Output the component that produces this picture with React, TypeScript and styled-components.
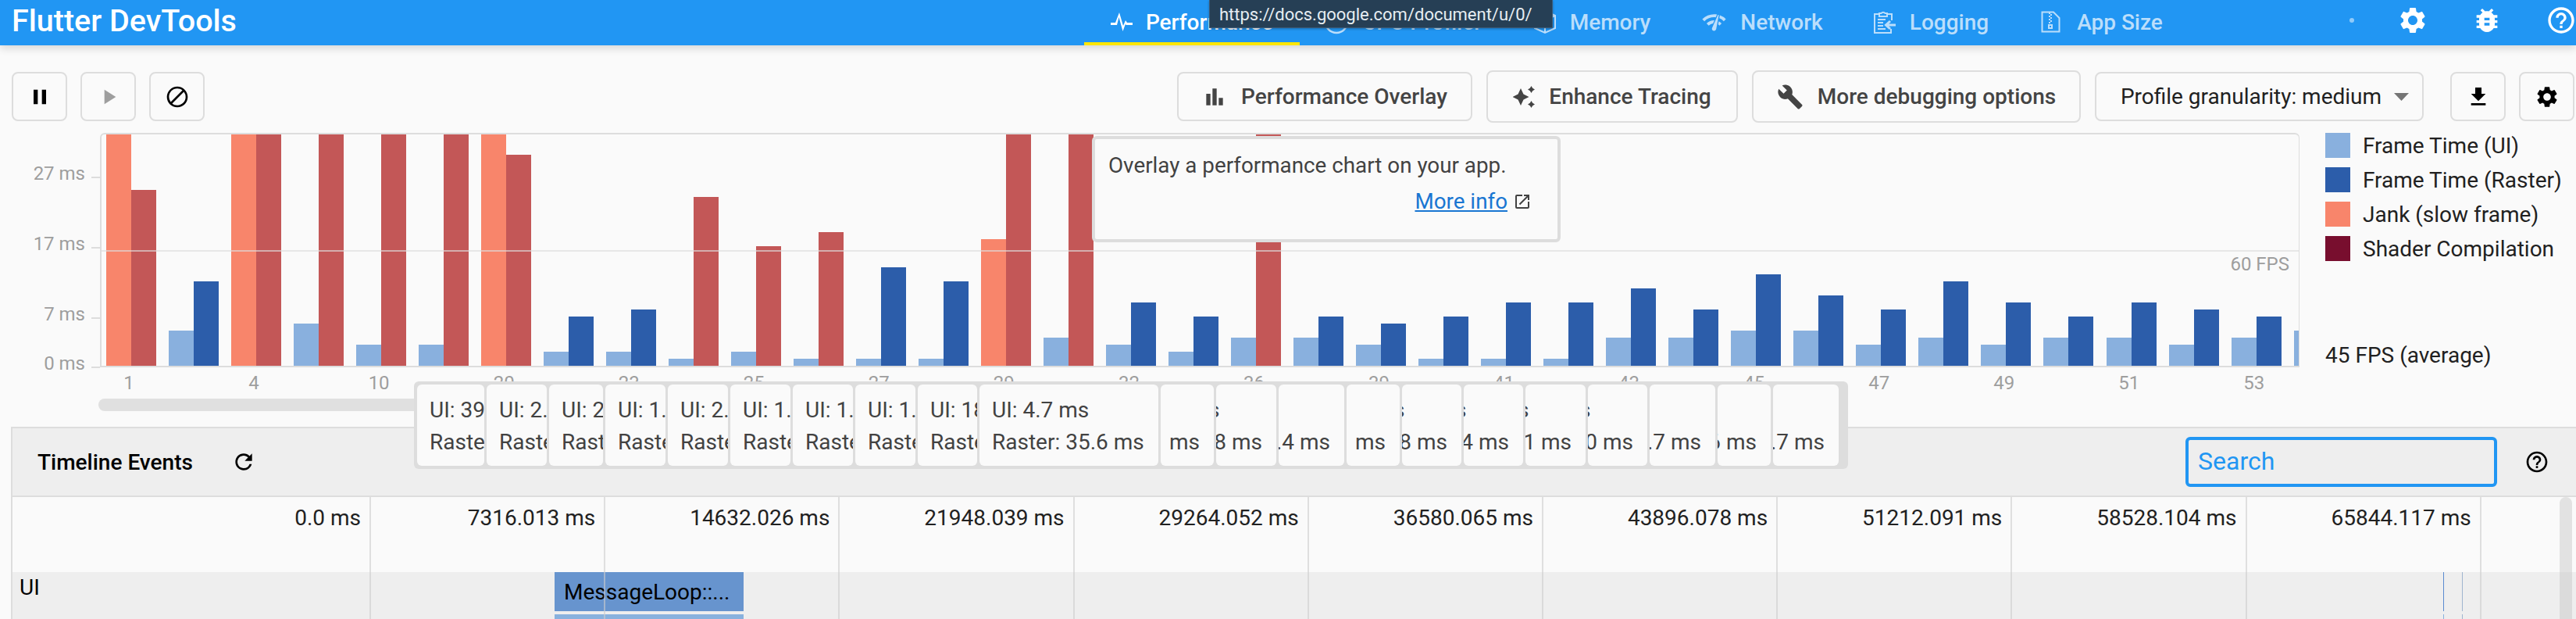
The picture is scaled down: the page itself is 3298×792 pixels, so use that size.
import React from 'react';
import styled, { createGlobalStyle } from 'styled-components';
import {
  MdPause, MdPlayArrow, MdBlock, MdFileDownload, MdSettings, MdBugReport, MdHelpOutline,
  MdBarChart, MdBuild, MdRefresh, MdOpenInNew, MdNetworkCheck,
} from 'react-icons/md';

const GlobalStyle = createGlobalStyle`
  html, body { margin: 0; padding: 0; background: #fafafa; overflow: hidden; }
  body { font-family: Roboto, "Liberation Sans", sans-serif; }
`;

const Page = styled.div`
  position: relative;
  width: 3298px;
  height: 792px;
  overflow: hidden;
  background: #fafafa;
  display: flex;
  flex-direction: column;
`;

/* ---------- App bar ---------- */
const AppBar = styled.header`
  position: relative;
  z-index: 3;
  flex: none;
  height: 58px;
  background: #2196f3;
  box-shadow: 0 4px 10px rgba(0, 0, 0, 0.14);
  display: flex;
  align-items: stretch;
`;
const Title = styled.h1`
  flex: none;
  width: 1373px;
  margin: 0;
  padding-left: 15px;
  color: #fff;
  font-size: 39.5px;
  font-weight: 500;
  line-height: 54px;
`;
const Tabs = styled.nav`
  display: flex;
  flex: none;
`;
const Tab = styled.div<{ $w: number; $active?: boolean }>`
  width: ${p => p.$w}px;
  display: flex;
  align-items: center;
  justify-content: center;
  gap: 17px;
  box-sizing: border-box;
  padding-top: 2px;
  color: ${p => (p.$active ? '#ffffff' : '#bbdefb')};
  font-size: 28px;
  font-weight: 500;
  white-space: nowrap;
  border-bottom: 4px solid ${p => (p.$active ? '#ffe600' : 'transparent')};
`;
const ActionGroup = styled.div`
  flex: 1;
  display: flex;
  align-items: center;
  justify-content: flex-end;
  gap: 55px;
  margin-right: -1px;
  color: #fff;
  padding-bottom: 6px;
`;
const StatusDot = styled.span`
  width: 6px;
  height: 6px;
  border-radius: 50%;
  background: #90caf9;
`;
const UrlTip = styled.div`
  position: absolute;
  z-index: 5;
  left: 1548px;
  top: 0;
  width: 440px;
  height: 36px;
  box-sizing: border-box;
  background: #263f55;
  border: 1px solid #3a5a78;
  border-top: 0;
  box-shadow: 0 1px 3px rgba(0, 0, 0, 0.3);
  color: #e6edf2;
  font-size: 22px;
  line-height: 38px;
  padding-left: 12px;
  white-space: nowrap;
`;

/* ---------- Toolbar ---------- */
const Toolbar = styled.div`
  flex: none;
  margin-top: 32px;
  height: 67px;
  padding: 0 2px 0 15px;
  display: flex;
  align-items: center;
`;
const IconGroup = styled.div`
  display: flex;
  gap: 17px;
`;
const Spacer = styled.div`
  flex: 1;
`;
const IconButton = styled.button<{ $muted?: boolean }>`
  width: 71px;
  height: 63px;
  padding: 0;
  background: #fafafa;
  border: 2px solid #dddddd;
  border-radius: 8px;
  display: flex;
  align-items: center;
  justify-content: center;
  color: ${p => (p.$muted ? '#9e9e9e' : '#000')};
`;
const TextButton = styled.button<{ $w: number; $tall?: boolean }>`
  width: ${p => p.$w}px;
  height: ${p => (p.$tall ? 67 : 63)}px;
  margin-left: 18px;
  padding: 0;
  background: #fafafa;
  border: 2px solid #dddddd;
  border-radius: 8px;
  display: flex;
  align-items: center;
  justify-content: center;
  gap: 18px;
  color: #444;
  font-family: inherit;
  font-size: 28px;
  font-weight: 500;
  white-space: nowrap;
`;
const Dropdown = styled(TextButton)`
  margin-right: 34px;
  padding-left: 14px;
  gap: 16px;
  color: #212121;
  font-weight: 400;
`;

/* ---------- Frames chart ---------- */
const ChartRow = styled.section`
  flex: none;
  margin-top: 13px;
  height: 300px;
  display: flex;
`;
const YAxis = styled.div`
  flex: none;
  width: 128px;
  padding-top: 56px;
  box-sizing: border-box;
`;
const YTick = styled.div<{ $h: number }>`
  height: ${p => p.$h}px;
  display: flex;
  justify-content: flex-end;
  align-items: flex-start;
  gap: 8px;
  color: #9e9e9e;
  font-size: 24px;
  line-height: 26px;
  &::after {
    content: '';
    width: 11px;
    height: 2px;
    background: #dddddd;
  }
`;
const YLabel = styled.span`
  margin-top: -17px;
`;
const Plot = styled.div`
  position: relative;
  flex: none;
  width: 2816px;
  box-sizing: border-box;
  border: 2px solid #dddddd;
  border-right-width: 1px;
  border-radius: 6px 6px 0 0;
  overflow: hidden;
`;
const Bars = styled.div`
  height: 100%;
  padding-left: 6px;
  display: flex;
  align-items: flex-end;
  gap: 16.03px;
`;
const BarGroup = styled.div`
  flex: none;
  width: 64px;
  height: 100%;
  display: flex;
  align-items: flex-end;
`;
const toneColor = { ui: '#89b0de', raster: '#2c5daa', jank: '#f8856b', jankRaster: '#c35757' };
type Tone = keyof typeof toneColor;
const Bar = styled.div<{ $h: number; $tone: Tone }>`
  flex: none;
  width: 32px;
  height: ${p => p.$h}px;
  background: ${p => toneColor[p.$tone]};
`;
const TargetLine = styled.div`
  position: absolute;
  left: 0;
  right: 0;
  top: 148px;
  height: 2px;
  background: rgba(221, 221, 221, 0.65);
`;
const FpsMark = styled.span`
  position: absolute;
  right: 12px;
  top: 153px;
  color: #9e9e9e;
  font-size: 24px;
  line-height: 26px;
`;
const Popup = styled.div`
  position: absolute;
  left: 1268px;
  top: 2px;
  z-index: 2;
  width: 600px;
  height: 136px;
  box-sizing: border-box;
  background: #fafafa;
  border: 4px solid #dddddd;
  border-radius: 6px;
  padding: 18px 16px 0 17px;
  color: #424242;
  font-size: 27.8px;
  line-height: 32px;
  white-space: nowrap;
`;
const PopupLink = styled.div`
  margin-top: 14px;
  display: flex;
  justify-content: flex-end;
  align-items: center;
  gap: 7px;
  padding-right: 17px;
`;
const MoreInfo = styled.a`
  color: #1976d2;
  text-decoration: underline;
`;
const Legend = styled.aside`
  flex: 1;
  margin-left: 33px;
  display: flex;
  flex-direction: column;
  gap: 12px;
  color: #212121;
  font-size: 28px;
`;
const LegendItem = styled.div`
  height: 32px;
  display: flex;
  align-items: center;
  gap: 16px;
  white-space: nowrap;
`;
const Swatch = styled.span<{ $c: string }>`
  flex: none;
  width: 32px;
  height: 32px;
  background: ${p => p.$c};
`;
const FpsAverage = styled.div`
  margin-top: auto;
  line-height: 30px;
`;
const XLabels = styled.div`
  flex: none;
  height: 40px;
  padding-left: 85px;
  display: flex;
  color: #9e9e9e;
  font-size: 24px;
  line-height: 40px;
`;
const XLabel = styled.span`
  flex: none;
  width: 160.06px;
  text-align: center;
`;
const ScrollThumb = styled.div`
  flex: none;
  margin-left: 126px;
  width: 600px;
  height: 16px;
  border-radius: 8px;
  background: #e0e0e0;
`;

/* ---------- Stacked hover cards ---------- */
const CardStrip = styled.div`
  position: absolute;
  z-index: 2;
  left: 530px;
  top: 488px;
  box-sizing: border-box;
  width: 1836px;
  height: 112px;
  padding: 4px;
  background: #dddddd;
  border-radius: 6px;
  display: flex;
  gap: 3px;
`;
const FrameCard = styled.div<{ $w: number; $end?: boolean }>`
  flex: none;
  width: ${p => p.$w}px;
  box-sizing: border-box;
  padding: 12px ${p => (p.$end ? 18 : 0)}px 0 ${p => (p.$end ? 0 : 16)}px;
  background: #fafafa;
  border-radius: 6px;
  overflow: hidden;
  display: flex;
  justify-content: ${p => (p.$end ? 'flex-end' : 'flex-start')};
  color: #424242;
  font-size: 28px;
  line-height: 41px;
  white-space: nowrap;
`;
const CardText = styled.div`
  flex: none;
`;

/* ---------- Timeline ---------- */
const Timeline = styled.section`
  flex: 1;
  margin: 20px 0 0 14px;
  border-left: 2px solid #dddddd;
  border-top: 2px solid #dddddd;
  display: flex;
  flex-direction: column;
  min-height: 0;
`;
const TimelineHeader = styled.div`
  flex: none;
  height: 88px;
  box-sizing: border-box;
  background: #eeeeee;
  border-bottom: 2px solid #dddddd;
  padding: 0 34px 0 32px;
  display: flex;
  align-items: center;
  color: #000;
`;
const TimelineTitle = styled.span`
  font-size: 28px;
  font-weight: 500;
  margin-right: 49px;
`;
const SearchBox = styled.div`
  width: 399px;
  height: 64px;
  box-sizing: border-box;
  border: 4px solid #2196f3;
  border-radius: 6px;
  padding-left: 12px;
  margin-right: 35px;
  color: #2196f3;
  font-size: 32px;
  line-height: 54px;
`;
const Tracks = styled.div`
  position: relative;
  flex: 1;
  overflow: hidden;
`;
const AxisSpace = styled.div`
  height: 96px;
`;
const UiTrack = styled.div`
  position: relative;
  height: 60px;
  background: #eeeeee;
  padding-left: 9px;
  color: #000;
  font-size: 28px;
  line-height: 40px;
`;
const EventBlock = styled.div<{ $l: number; $t: number; $w: number; $h: number; $c: string }>`
  position: absolute;
  left: ${p => p.$l}px;
  top: ${p => p.$t}px;
  width: ${p => p.$w}px;
  height: ${p => p.$h}px;
  background: ${p => p.$c};
`;
const EventLabel = styled.span`
  display: block;
  padding-left: 12px;
  color: #000;
  font-size: 28px;
  line-height: 52px;
  white-space: nowrap;
`;
const TimeGrid = styled.div`
  position: absolute;
  inset: 0;
  display: flex;
`;
const TimeCell = styled.div<{ $w: number }>`
  flex: none;
  width: ${p => p.$w}px;
  box-sizing: border-box;
  border-right: 2px solid rgba(205, 205, 205, 0.6);
  padding: 7px 11px 0 0;
  text-align: right;
  color: #212121;
  font-size: 28px;
  line-height: 40px;
  white-space: nowrap;
`;
const VScroll = styled.div`
  position: absolute;
  right: 5px;
  top: 0;
  bottom: -10px;
  width: 16px;
  border-radius: 8px;
  background: rgba(190, 190, 190, 0.4);
`;

/* ---------- Drawn icons ---------- */
const PulseIcon = () => (
  <svg width="28" height="24" viewBox="0 0 28 24" fill="currentColor">
    <path d="M0 13H6L11 0L16 17L19 10L21 13H28V16H19.5L19 14.5L15.5 24L10.5 6L8 16H0Z" />
  </svg>
);
const TimerIcon = () => (
  <svg width="32" height="32" viewBox="0 0 32 32" fill="none" stroke="currentColor" strokeWidth="2.5">
    <circle cx="16" cy="16" r="14" />
  </svg>
);
const MemoryIcon = () => (
  <svg width="30" height="32" viewBox="0 0 30 32" fill="none" stroke="currentColor" strokeWidth="2">
    <path d="M15 2L28 8V24L15 30L2 24V8Z" />
    <path d="M2 8L15 14L28 8M15 14V30" />
  </svg>
);
const LoggingIcon = () => (
  <svg width="30" height="30" viewBox="0 0 30 30" fill="none" stroke="currentColor" strokeWidth="2">
    <path d="M8 5H2V29H23V24" />
    <path d="M18 5H24V13" />
    <path d="M8 8V4H10.5A3 3 0 0 1 15.5 4H18V8Z" />
    <path d="M6 12H16M6 16H13M6 20H13M6 24H16" />
    <path d="M29 19H17M22 14L16.5 19L22 24" strokeWidth="3" />
  </svg>
);
const ZipIcon = () => (
  <svg width="29" height="28" viewBox="0 0 29 28" fill="none" stroke="currentColor" strokeWidth="2">
    <path d="M1.5 1.5H16L23.5 9V26.5H1.5Z" />
    <path d="M10 3H12M12 5H14M10 7H12M12 9H14M10 11H12M12 13H14M10 15H12" />
    <path d="M10 18H14V22H10Z" />
  </svg>
);
const SparkleIcon = () => (
  <svg width="28" height="28" viewBox="0 0 28 28" fill="currentColor">
    <path d="M10 3L13.5 10.5L20.5 14L13.5 17.5L10 25L6.5 17.5L-0.5 14L6.5 10.5Z" />
    <path d="M23.5 0L25.2 2.8L28 4.5L25.2 6.2L23.5 9L21.8 6.2L19 4.5L21.8 2.8Z" />
    <path d="M23.5 19L25.2 21.8L28 23.5L25.2 25.2L23.5 28L21.8 25.2L19 23.5L21.8 21.8Z" />
  </svg>
);
const CaretIcon = () => (
  <svg width="19" height="10" viewBox="0 0 19 10" fill="#757575">
    <path d="M0 0H19L9.5 10Z" />
  </svg>
);

/* ---------- Data ---------- */
const F = 400;
type Frame = [number, number, '' | 'r' | 'ur'];
const frames: Frame[] = [
  [F, 225, 'ur'], [45, 108, ''], [F, F, 'ur'], [54, F, 'r'], [27, F, 'r'], [27, F, 'r'],
  [F, 270, 'ur'], [18, 63, ''], [18, 72, ''], [9, 216, 'r'], [18, 153, 'r'], [9, 171, 'r'],
  [9, 126, ''], [9, 108, ''], [162, F, 'ur'], [36, F, 'r'], [27, 81, ''], [18, 63, ''],
  [36, F, 'r'], [36, 63, ''], [27, 54, ''], [9, 63, ''], [9, 81, ''], [9, 81, ''],
  [36, 99, ''], [36, 72, ''], [45, 117, ''], [45, 90, ''], [27, 72, ''], [36, 108, ''],
  [27, 81, ''], [36, 63, ''], [36, 81, ''], [27, 72, ''], [36, 63, ''], [45, 90, ''],
];
const xLabels = ['1', '4', '10', '20', '23', '25', '27', '29', '32', '36', '39', '41', '43', '45', '47', '49', '51', '53'];
const legend = [
  ['#89b0de', 'Frame Time (UI)'],
  ['#2c5daa', 'Frame Time (Raster)'],
  ['#f8856b', 'Jank (slow frame)'],
  ['#780e2e', 'Shader Compilation'],
];
type Card = { w: number; ui: string; raster: string; end?: boolean };
const cards: Card[] = [
  { w: 86, ui: 'UI: 39.2 ms', raster: 'Raster: 24.5 ms' },
  { w: 77, ui: 'UI: 2.1 ms', raster: 'Raster: 7.1 ms' },
  { w: 69, ui: 'UI: 2.3 ms', raster: 'Raster: 8.2 ms' },
  { w: 77, ui: 'UI: 1.2 ms', raster: 'Raster: 24.0 ms' },
  { w: 77, ui: 'UI: 2.2 ms', raster: 'Raster: 17.1 ms' },
  { w: 77, ui: 'UI: 1.2 ms', raster: 'Raster: 19.0 ms' },
  { w: 77, ui: 'UI: 1.3 ms', raster: 'Raster: 14.1 ms' },
  { w: 77, ui: 'UI: 1.4 ms', raster: 'Raster: 12.3 ms' },
  { w: 76, ui: 'UI: 18.2 ms', raster: 'Raster: 41.0 ms' },
  { w: 229, ui: 'UI: 4.7 ms', raster: 'Raster: 35.6 ms' },
  { w: 68, ui: '', raster: 'ms', end: true },
  { w: 77, ui: 'UI: 2.5 ms', raster: 'Raster: 7.8 ms', end: true },
  { w: 84, ui: '', raster: '.4 ms', end: true },
  { w: 68, ui: '', raster: 'ms', end: true },
  { w: 76, ui: 'UI: 3.1 ms', raster: 'Raster: 6.8 ms', end: true },
  { w: 76, ui: 'UI: 1.2 ms', raster: 'Raster: 7.4 ms', end: true },
  { w: 77, ui: 'UI: 1.1 ms', raster: 'Raster: 9.1 ms', end: true },
  { w: 76, ui: 'UI: 1.0 ms', raster: 'Raster: 9.0 ms', end: true },
  { w: 84, ui: '', raster: '.7 ms', end: true },
  { w: 68, ui: '', raster: 'Raster: 8.6 ms', end: true },
  { w: 84, ui: '', raster: '.7 ms', end: true },
];
const times = ['0.0 ms', '7316.013 ms', '14632.026 ms', '21948.039 ms', '29264.052 ms', '36580.065 ms', '43896.078 ms', '51212.091 ms', '58528.104 ms', '65844.117 ms'];

const tabs: { label: string; w: number; icon: React.ReactNode; active?: boolean }[] = [
  { label: 'Performance', w: 276, icon: <PulseIcon />, active: true },
  { label: 'CPU Profiler', w: 264, icon: <TimerIcon /> },
  { label: 'Memory', w: 220, icon: <MemoryIcon /> },
  { label: 'Network', w: 216, icon: <MdNetworkCheck size={33} /> },
  { label: 'Logging', w: 216, icon: <LoggingIcon /> },
  { label: 'App Size', w: 222, icon: <ZipIcon /> },
];

export default function App() {
  return (
    <Page>
      <GlobalStyle />
      <AppBar>
        <Title>Flutter DevTools</Title>
        <Tabs>
          {tabs.map(t => (
            <Tab key={t.label} $w={t.w} $active={t.active}>
              {t.icon}
              <span>{t.label}</span>
            </Tab>
          ))}
        </Tabs>
        <ActionGroup>
          <StatusDot />
          <MdSettings size={40} />
          <MdBugReport size={40} />
          <MdHelpOutline size={40} />
        </ActionGroup>
      </AppBar>
      <UrlTip>https://docs.google.com/document/u/0/</UrlTip>

      <Toolbar>
        <IconGroup>
          <IconButton><MdPause size={32} /></IconButton>
          <IconButton $muted><MdPlayArrow size={32} /></IconButton>
          <IconButton><MdBlock size={32} /></IconButton>
        </IconGroup>
        <Spacer />
        <TextButton $w={378}><MdBarChart size={32} />Performance Overlay</TextButton>
        <TextButton $w={322} $tall><SparkleIcon />Enhance Tracing</TextButton>
        <TextButton $w={421} $tall><MdBuild size={34} />More debugging options</TextButton>
        <Dropdown $w={421}>Profile granularity: medium<CaretIcon /></Dropdown>
        <IconGroup>
          <IconButton><MdFileDownload size={32} /></IconButton>
          <IconButton><MdSettings size={32} /></IconButton>
        </IconGroup>
      </Toolbar>

      <ChartRow>
        <YAxis>
          <YTick $h={90}><YLabel>27 ms</YLabel></YTick>
          <YTick $h={90}><YLabel>17 ms</YLabel></YTick>
          <YTick $h={63}><YLabel>7 ms</YLabel></YTick>
          <YTick $h={0}><YLabel>0 ms</YLabel></YTick>
        </YAxis>
        <Plot>
          <Bars>
            {frames.map(([u, r, flags], i) => (
              <BarGroup key={i}>
                <Bar $h={u} $tone={flags === 'ur' ? 'jank' : 'ui'} />
                <Bar $h={r} $tone={flags ? 'jankRaster' : 'raster'} />
              </BarGroup>
            ))}
          </Bars>
          <TargetLine />
          <FpsMark>60 FPS</FpsMark>
          <Popup>
            Overlay a performance chart on your app.
            <PopupLink>
              <MoreInfo>More info</MoreInfo>
              <MdOpenInNew size={24} color="#424242" />
            </PopupLink>
          </Popup>
        </Plot>
        <Legend>
          {legend.map(([c, label]) => (
            <LegendItem key={label}><Swatch $c={c} />{label}</LegendItem>
          ))}
          <FpsAverage>45 FPS (average)</FpsAverage>
        </Legend>
      </ChartRow>
      <XLabels>
        {xLabels.map(l => <XLabel key={l}>{l}</XLabel>)}
      </XLabels>
      <ScrollThumb />

      <CardStrip>
        {cards.map((c, i) => (
          <FrameCard key={i} $w={c.w} $end={c.end}>
            <CardText>
              <div>{c.ui || '\u00a0'}</div>
              <div>{c.raster}</div>
            </CardText>
          </FrameCard>
        ))}
      </CardStrip>

      <Timeline>
        <TimelineHeader>
          <TimelineTitle>Timeline Events</TimelineTitle>
          <MdRefresh size={32} />
          <Spacer />
          <SearchBox>Search</SearchBox>
          <MdHelpOutline size={32} />
        </TimelineHeader>
        <Tracks>
          <AxisSpace />
          <UiTrack>
            UI
            <EventBlock $l={694} $t={0} $w={242} $h={50} $c="#6794ce">
              <EventLabel>MessageLoop::...</EventLabel>
            </EventBlock>
            <EventBlock $l={694} $t={54} $w={242} $h={10} $c="#88b1de" />
            <EventBlock $l={3112} $t={0} $w={1} $h={50} $c="#5b8bd0" />
            <EventBlock $l={3112} $t={54} $w={1} $h={10} $c="#88b1de" />
            <EventBlock $l={3136} $t={0} $w={1} $h={50} $c="#9fb4cf" />
            <EventBlock $l={3136} $t={54} $w={1} $h={10} $c="#9fb4cf" />
          </UiTrack>
          <TimeGrid>
            {times.map((t, i) => (
              <TimeCell key={t} $w={i === 0 ? 459 : 300.2}>{t}</TimeCell>
            ))}
          </TimeGrid>
          <VScroll />
        </Tracks>
      </Timeline>
    </Page>
  );
}
